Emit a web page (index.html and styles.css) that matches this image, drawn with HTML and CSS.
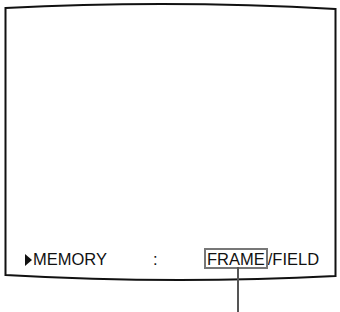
FILE: index.html
```html
<!DOCTYPE html>
<html>
<head>
<meta charset="utf-8">
<link rel="stylesheet" href="styles.css">
</head>
<body>
<div class="canvas">
  <svg class="outline" width="340" height="312" viewBox="0 0 340 312">
    <path d="M5.5 8 Q170.5 -0.5 335.5 9 L335.5 276 Q170.5 284.5 5.5 275 Z" fill="none" stroke="#111" stroke-width="2"/>
  </svg>
  <div class="menu-row">
    <span class="marker"></span>
    <span class="label">MEMORY</span>
    <span class="colon">:</span>
    <span class="option selected">FRAME</span>
    <span class="option">/FIELD</span>
  </div>
</div>
</body>
</html>
```
FILE: styles.css
```css
html, body {
  margin: 0;
  padding: 0;
  background: #fff;
}
.canvas {
  position: relative;
  width: 340px;
  height: 312px;
  overflow: hidden;
  font-family: "Liberation Sans", Arial, sans-serif;
  color: #111;
}
.outline {
  position: absolute;
  left: 0;
  top: 0;
}
.menu-row {
  display: flex;
  align-items: center;
  padding: 248px 0 0 25px;
  font-size: 16.5px;
  line-height: 16px;
}
.marker {
  width: 0;
  height: 0;
  border-left: 7px solid #111;
  border-top: 6px solid transparent;
  border-bottom: 6px solid transparent;
  margin-right: 1px;
  margin-top: 2px;
}
.label {
  width: 120px;
}
.colon {
  width: 51px;
}
.option {
  padding-top: 1px;
}
.selected {
  position: relative;
  border: 2px solid #777;
  padding: 1px 1px 0 1px;
}
.selected::after {
  content: "";
  position: absolute;
  left: 31px;
  top: 100%;
  width: 2px;
  height: 60px;
  background: #555;
}
```
